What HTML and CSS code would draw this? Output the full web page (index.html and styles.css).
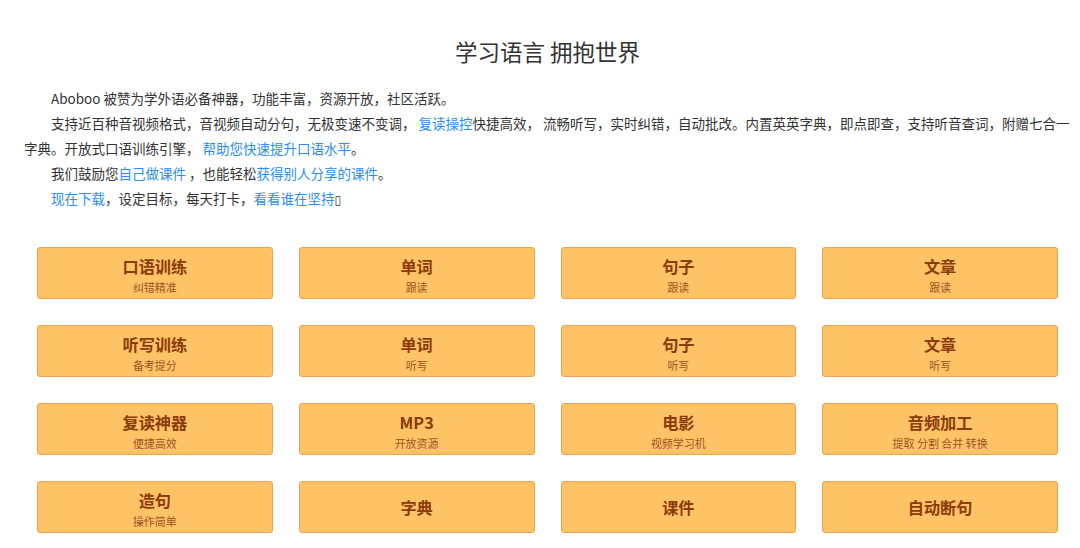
FILE: index.html
```html
<!DOCTYPE html>
<html lang="zh-CN">
<head>
<meta charset="utf-8">
<title>学习语言 拥抱世界</title>
<link rel="stylesheet" href="styles.css">
</head>
<body>
<div class="page">
  <h1 class="title">学习语言 拥抱世界</h1>
  <div class="intro">
    <p>Aboboo 被赞为学外语必备神器，功能丰富，资源开放，社区活跃。</p>
    <p>支持近百种音视频格式，音视频自动分句，无极变速不变调， <a class="link" href="#">复读操控</a>快捷高效， 流畅听写，实时纠错，自动批改。内置英英字典，即点即查，支持听音查词，附赠七合一字典。开放式口语训练引擎， <a class="link" href="#">帮助您快速提升口语水平</a>。</p>
    <p>我们鼓励您<a class="link" href="#">自己做课件</a> ，也能轻松<a class="link" href="#">获得别人分享的课件</a>。</p>
    <p><a class="link" href="#">现在下载</a>，设定目标，每天打卡，<a class="link" href="#">看看谁在坚持</a><span class="tofu">▯</span></p>
  </div>
  <div class="grid">
    <a class="card" href="#"><span class="card-title">口语训练</span><span class="card-sub">纠错精准</span></a>
    <a class="card" href="#"><span class="card-title">单词</span><span class="card-sub">跟读</span></a>
    <a class="card" href="#"><span class="card-title">句子</span><span class="card-sub">跟读</span></a>
    <a class="card" href="#"><span class="card-title">文章</span><span class="card-sub">跟读</span></a>
    <a class="card" href="#"><span class="card-title">听写训练</span><span class="card-sub">备考提分</span></a>
    <a class="card" href="#"><span class="card-title">单词</span><span class="card-sub">听写</span></a>
    <a class="card" href="#"><span class="card-title">句子</span><span class="card-sub">听写</span></a>
    <a class="card" href="#"><span class="card-title">文章</span><span class="card-sub">听写</span></a>
    <a class="card" href="#"><span class="card-title">复读神器</span><span class="card-sub">便捷高效</span></a>
    <a class="card" href="#"><span class="card-title">MP3</span><span class="card-sub">开放资源</span></a>
    <a class="card" href="#"><span class="card-title">电影</span><span class="card-sub">视频学习机</span></a>
    <a class="card" href="#"><span class="card-title">音频加工</span><span class="card-sub">提取 分割 合并 转换</span></a>
    <a class="card" href="#"><span class="card-title">造句</span><span class="card-sub">操作简单</span></a>
    <a class="card" href="#"><span class="card-title">字典</span></a>
    <a class="card" href="#"><span class="card-title">课件</span></a>
    <a class="card" href="#"><span class="card-title">自动断句</span></a>
  </div>
</div>
</body>
</html>
```
FILE: styles.css
```css
html, body {
  margin: 0;
  padding: 0;
  background: #ffffff;
}

body {
  font-family: "Noto Sans CJK SC", "Noto Sans", sans-serif;
  color: #333333;
}

.page {
  padding-top: 36px;
}

.title {
  margin: 0;
  padding-left: 15px;
  font-size: 22.5px;
  line-height: 30px;
  font-weight: 400;
  color: #333333;
  text-align: center;
}

.intro {
  margin-top: 20px;
  padding: 0 5px 0 24px;
  font-size: 13.5px;
  line-height: 25px;
}

.intro p {
  margin: 0;
  text-indent: 2em;
}

.link {
  color: #2b8df2;
  text-decoration: none;
}

.tofu {
  font-family: "DejaVu Sans", sans-serif;
  font-size: 12px;
  color: #333333;
}

.grid {
  margin-top: 34px;
  padding: 0 22px 0 37px;
  display: grid;
  grid-template-columns: repeat(4, 1fr);
  column-gap: 26px;
  row-gap: 26px;
}

.card {
  box-sizing: border-box;
  height: 52px;
  display: flex;
  flex-direction: column;
  align-items: center;
  justify-content: center;
  background: #fec364;
  border: 1px solid #f2a152;
  border-radius: 3px;
  text-decoration: none;
}

.card-title {
  font-size: 16.2px;
  line-height: 29px;
  font-weight: 700;
  color: #8c3b0c;
}

.card-sub {
  font-size: 11px;
  line-height: 13px;
  color: #9e5424;
}
```
